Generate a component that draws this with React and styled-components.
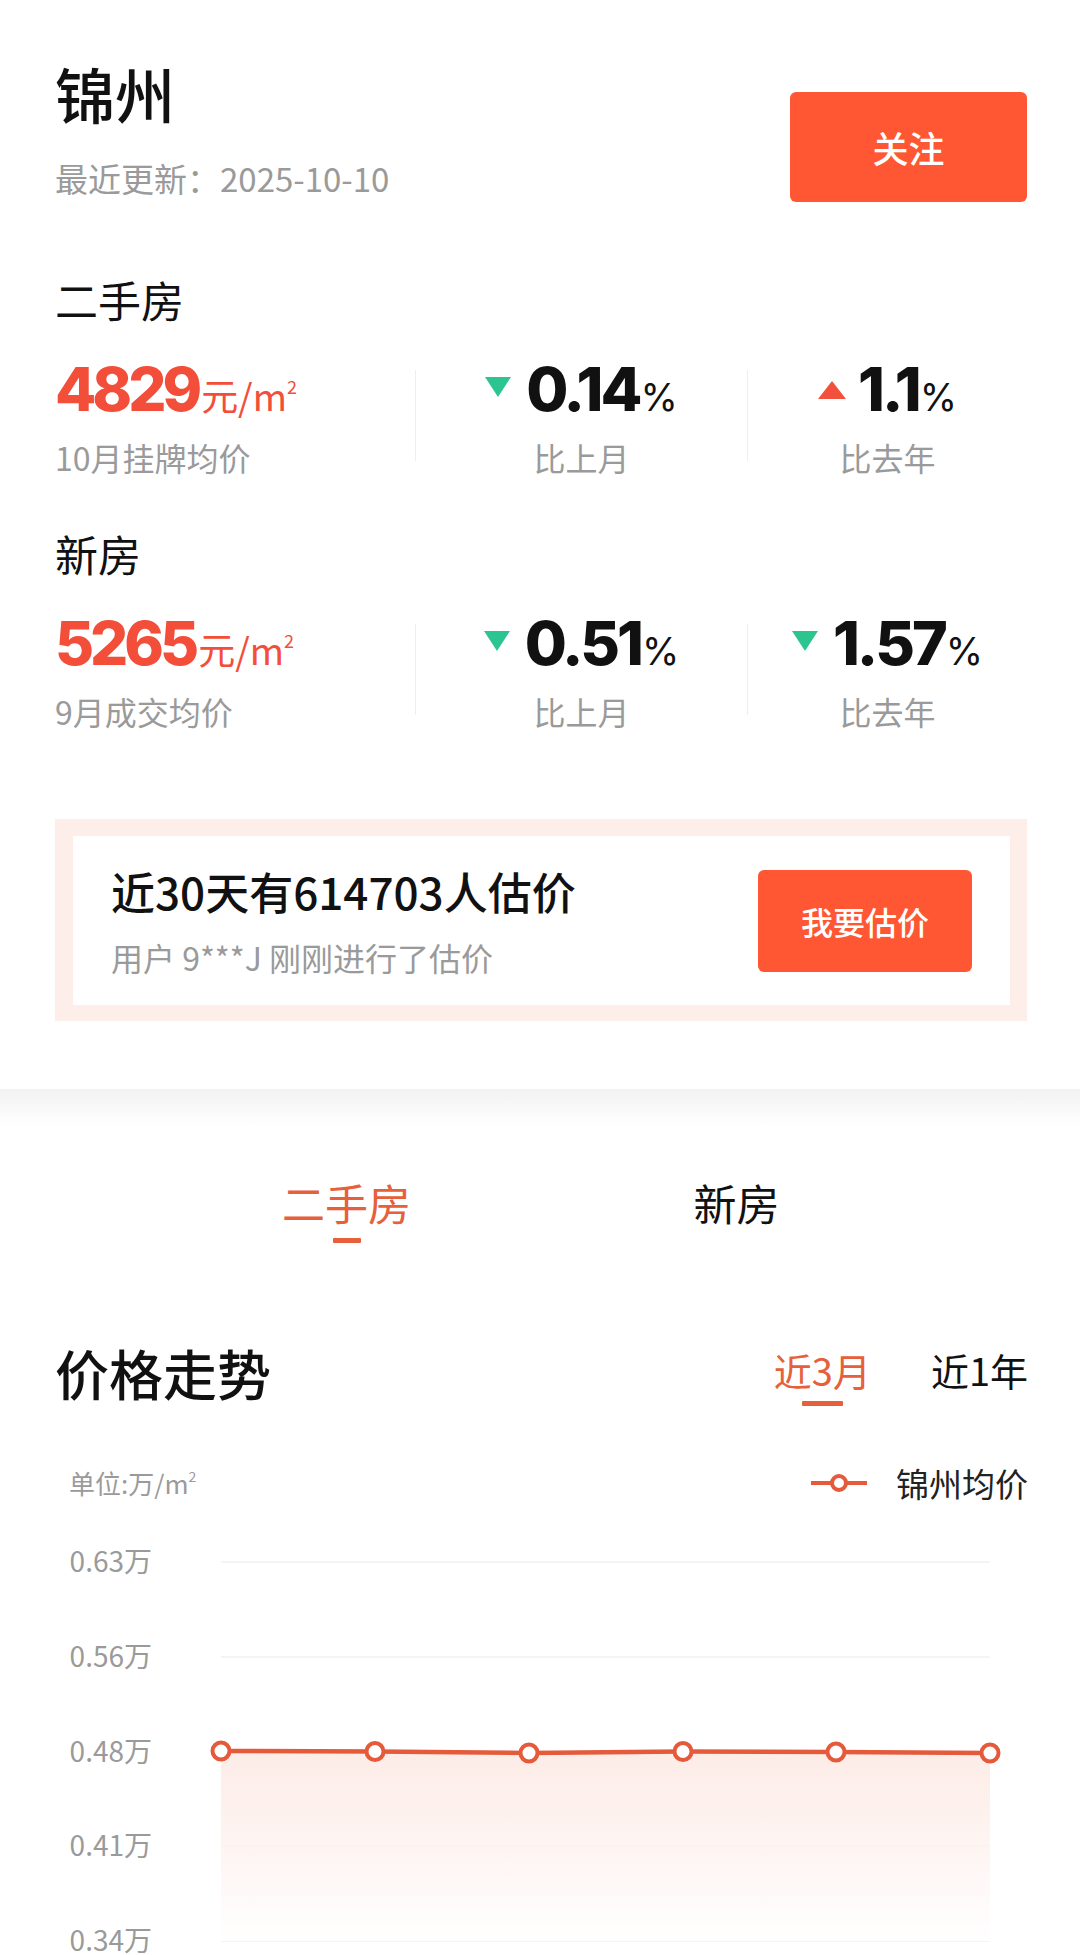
import React from "react";
import styled, { createGlobalStyle } from "styled-components";

const GlobalStyle = createGlobalStyle`
  html, body { margin: 0; padding: 0; background: #ffffff; }
  * { box-sizing: border-box; }
`;

const ORANGE = "#FF5733";
const RED = "#F24E3A";
const TAB = "#E5603B";
const GRAY = "#9A9A9A";
const INK = "#111111";

const Page = styled.div`
  width: 1080px;
  background: #fff;
  font-family: "Noto Sans CJK SC", "Noto Sans", sans-serif;
  color: ${INK};
`;

const TopSection = styled.section`
  padding: 58px 53px 68px 55px;
`;

const Header = styled.div`
  display: flex;
  justify-content: space-between;
  align-items: flex-start;
`;

const Title = styled.h1`
  margin: 0;
  font-size: 60px;
  line-height: 70px;
  font-weight: 500;
`;

const Updated = styled.div`
  margin-top: 30px;
  font-size: 33px;
  line-height: 40px;
  color: ${GRAY};
`;

const FilledButton = styled.button`
  width: ${(p) => p.$w}px;
  height: ${(p) => p.$h}px;
  margin-top: ${(p) => p.$mt || 0}px;
  background: ${ORANGE};
  border: none;
  border-radius: 6px;
  color: #fff;
  font-family: "Noto Sans CJK SC", sans-serif;
  font-size: ${(p) => p.$fs}px;
  font-weight: 500;
  flex-shrink: 0;
`;

const SectionLabel = styled.div`
  margin-top: ${(p) => p.$mt}px;
  font-size: 43px;
  line-height: 50px;
`;

const StatsRow = styled.div`
  display: flex;
  align-items: center;
  margin-top: 30px;
`;

const Col = styled.div`
  display: flex;
  flex-direction: column;
  align-items: ${(p) => (p.$first ? "flex-start" : "center")};
  width: ${(p) => (p.$w ? `${p.$w}px` : "auto")};
  flex: ${(p) => (p.$w ? "none" : "1")};
`;

const ValueLine = styled.div`
  display: flex;
  align-items: baseline;
  height: 70px;
  line-height: 70px;
`;

const BigNum = styled.span`
  font-family: Inter, "Open Sans", sans-serif;
  font-weight: 800;
  font-size: ${(p) => (p.$price ? 60 : 61)}px;
  letter-spacing: ${(p) => (p.$price ? -4 : -3)}px;
  color: ${(p) => (p.$price ? RED : INK)};
`;

const Unit = styled.span`
  font-size: 37px;
  color: ${RED};
  margin-left: 3px;
  sup {
    font-size: 18px;
    vertical-align: 17px;
    line-height: 0;
  }
`;

const Percent = styled.span`
  font-family: Inter, "Open Sans", sans-serif;
  font-weight: 400;
  font-size: 38px;
  margin-left: 1px;
`;

const Arrow = styled.svg`
  align-self: flex-start;
  margin-top: ${(p) => (p.$up ? 27 : 23)}px;
  margin-right: ${(p) => (p.$up ? 12 : 15)}px;
  flex-shrink: 0;
`;

const StatLabel = styled.div`
  margin-top: 13px;
  font-size: 32px;
  line-height: 40px;
  color: ${GRAY};
`;

const Divider = styled.div`
  width: 1px;
  height: 91px;
  background: #eeeeee;
  flex-shrink: 0;
`;

const Banner = styled.div`
  margin-top: 88px;
  background: #fdeeea;
  padding: 17px 17px 16px 18px;
`;

const BannerInner = styled.div`
  background: #fff;
  height: 169px;
  display: flex;
  align-items: center;
  justify-content: space-between;
  padding: 0 38px;
`;

const BannerTitle = styled.div`
  font-size: 44px;
  line-height: 52px;
  font-weight: 500;
`;

const BannerSub = styled.div`
  margin-top: 20px;
  font-size: 32px;
  line-height: 40px;
  color: ${GRAY};
`;

const Separator = styled.div`
  height: 37px;
  background: linear-gradient(#f2f2f2, #ffffff);
`;

const LowerSection = styled.section`
  padding: 0 52px 0 55px;
`;

const Tabs = styled.div`
  display: flex;
  justify-content: center;
  margin-top: 51px;
`;

const Tab = styled.div`
  width: 390px;
  display: flex;
  flex-direction: column;
  align-items: center;
`;

const TabText = styled.div`
  font-size: ${(p) => p.$fs}px;
  line-height: ${(p) => p.$lh}px;
  color: ${(p) => (p.$active ? TAB : INK)};
`;

const Underline = styled.div`
  width: ${(p) => p.$w}px;
  height: 5px;
  margin-top: ${(p) => p.$mt}px;
  background: ${(p) => (p.$show ? TAB : "transparent")};
  border-radius: 1px;
`;

const ChartHeader = styled.div`
  display: flex;
  justify-content: space-between;
  align-items: flex-start;
  margin-top: 98px;
`;

const ChartTitle = styled.h2`
  margin: 0;
  font-size: 54px;
  line-height: 64px;
  font-weight: 500;
`;

const RangeTabs = styled.div`
  display: flex;
  gap: 60px;
  margin-top: 6px;
`;

const RangeTab = styled.div`
  display: flex;
  flex-direction: column;
  align-items: center;
`;

const LegendRow = styled.div`
  display: flex;
  justify-content: space-between;
  align-items: center;
  height: 40px;
  margin-top: 57px;
  padding-left: 14px;
`;

const UnitText = styled.div`
  font-size: 26px;
  line-height: 34px;
  color: ${GRAY};
  sup {
    font-size: 14px;
    vertical-align: 12px;
    line-height: 0;
  }
`;

const Legend = styled.div`
  display: flex;
  align-items: center;
  gap: 29px;
  font-size: 33px;
  line-height: 40px;
  color: #222;
`;

const ChartSvg = styled.svg`
  display: block;
  margin: 0 -52px 0 -55px;
`;

const DownArrow = () => (
  <Arrow width="26" height="20" viewBox="0 0 26 20">
    <polygon points="0,0 26,0 13,20" fill="#2DC58F" />
  </Arrow>
);

const UpArrow = () => (
  <Arrow $up width="28" height="18" viewBox="0 0 28 18">
    <polygon points="14,0 28,18 0,18" fill="#F0503C" />
  </Arrow>
);

const Change = ({ dir, value, label }) => (
  <>
    <ValueLine>
      {dir === "up" ? <UpArrow /> : <DownArrow />}
      <BigNum>{value}</BigNum>
      <Percent>%</Percent>
    </ValueLine>
    <StatLabel>{label}</StatLabel>
  </>
);

const StatBlock = ({ title, mt, price, priceLabel, mom, yoy }) => (
  <>
    <SectionLabel $mt={mt}>{title}</SectionLabel>
    <StatsRow>
      <Col $first $w={360}>
        <ValueLine>
          <BigNum $price>{price}</BigNum>
          <Unit>
            元/m<sup>2</sup>
          </Unit>
        </ValueLine>
        <StatLabel>{priceLabel}</StatLabel>
      </Col>
      <Divider />
      <Col $w={331}>
        <Change dir={mom.dir} value={mom.value} label="比上月" />
      </Col>
      <Divider />
      <Col>
        <Change dir={yoy.dir} value={yoy.value} label="比去年" />
      </Col>
    </StatsRow>
  </>
);

const gridYs = [59, 154, 249, 343, 438];
const gridLabels = ["0.63万", "0.56万", "0.48万", "0.41万", "0.34万"];
const points = [
  [221, 248],
  [375, 248.5],
  [529, 250],
  [683, 248.5],
  [836, 249],
  [990, 250],
];

const Chart = () => {
  const line = points.map((p, i) => `${i ? "L" : "M"}${p[0]},${p[1]}`).join(" ");
  const area = `${line} L990,438 L221,438 Z`;
  return (
    <ChartSvg width="1080" height="470" viewBox="0 0 1080 470">
      <defs>
        <linearGradient id="areaFill" x1="0" y1="0" x2="0" y2="1">
          <stop offset="0" stopColor="#FCE6DF" stopOpacity="0.75" />
          <stop offset="1" stopColor="#FFFFFF" stopOpacity="0.9" />
        </linearGradient>
      </defs>
      {gridYs.map((y, i) => (
        <g key={y}>
          <line x1="221" x2="990" y1={y} y2={y} stroke="#F0F0F0" strokeWidth="1.5" />
          <text
            x="152"
            y={y + 10}
            textAnchor="end"
            fontSize="28"
            fill={GRAY}
            fontFamily='"Noto Sans CJK SC", sans-serif'
          >
            {gridLabels[i]}
          </text>
        </g>
      ))}
      <path d={area} fill="url(#areaFill)" />
      <path d={line} fill="none" stroke="#E45A3A" strokeWidth="4.5" strokeLinejoin="round" />
      {points.map(([x, y]) => (
        <circle key={x} cx={x} cy={y} r="8.5" fill="#fff" stroke="#E45A3A" strokeWidth="4" />
      ))}
    </ChartSvg>
  );
};

export default function App() {
  return (
    <Page>
      <GlobalStyle />
      <TopSection>
        <Header>
          <div>
            <Title>锦州</Title>
            <Updated>最近更新：2025-10-10</Updated>
          </div>
          <FilledButton $w={237} $h={110} $mt={34} $fs={36}>
            关注
          </FilledButton>
        </Header>

        <StatBlock
          title="二手房"
          mt={72}
          price="4829"
          priceLabel="10月挂牌均价"
          mom={{ dir: "down", value: "0.14" }}
          yoy={{ dir: "up", value: "1.1" }}
        />
        <StatBlock
          title="新房"
          mt={51}
          price="5265"
          priceLabel="9月成交均价"
          mom={{ dir: "down", value: "0.51" }}
          yoy={{ dir: "down", value: "1.57" }}
        />

        <Banner>
          <BannerInner>
            <div>
              <BannerTitle>近30天有614703人估价</BannerTitle>
              <BannerSub>用户 9***J 刚刚进行了估价</BannerSub>
            </div>
            <FilledButton $w={214} $h={102} $fs={32}>
              我要估价
            </FilledButton>
          </BannerInner>
        </Banner>
      </TopSection>

      <Separator />

      <LowerSection>
        <Tabs>
          <Tab>
            <TabText $active $fs={43} $lh={50}>二手房</TabText>
            <Underline $show $w={28} $mt={11} />
          </Tab>
          <Tab>
            <TabText $fs={43} $lh={50}>新房</TabText>
            <Underline $w={28} $mt={11} />
          </Tab>
        </Tabs>

        <ChartHeader>
          <ChartTitle>价格走势</ChartTitle>
          <RangeTabs>
            <RangeTab>
              <TabText $active $fs={38} $lh={46}>近3月</TabText>
              <Underline $show $w={41} $mt={8} />
            </RangeTab>
            <RangeTab>
              <TabText $fs={38} $lh={46}>近1年</TabText>
              <Underline $w={41} $mt={8} />
            </RangeTab>
          </RangeTabs>
        </ChartHeader>

        <LegendRow>
          <UnitText>
            单位:万/m<sup>2</sup>
          </UnitText>
          <Legend>
            <svg width="56" height="20" viewBox="0 0 56 20">
              <line x1="0" y1="10" x2="56" y2="10" stroke="#E45A3A" strokeWidth="4" />
              <circle cx="28" cy="10" r="7" fill="#fff" stroke="#E45A3A" strokeWidth="4" />
            </svg>
            锦州均价
          </Legend>
        </LegendRow>

        <Chart />
      </LowerSection>
    </Page>
  );
}
